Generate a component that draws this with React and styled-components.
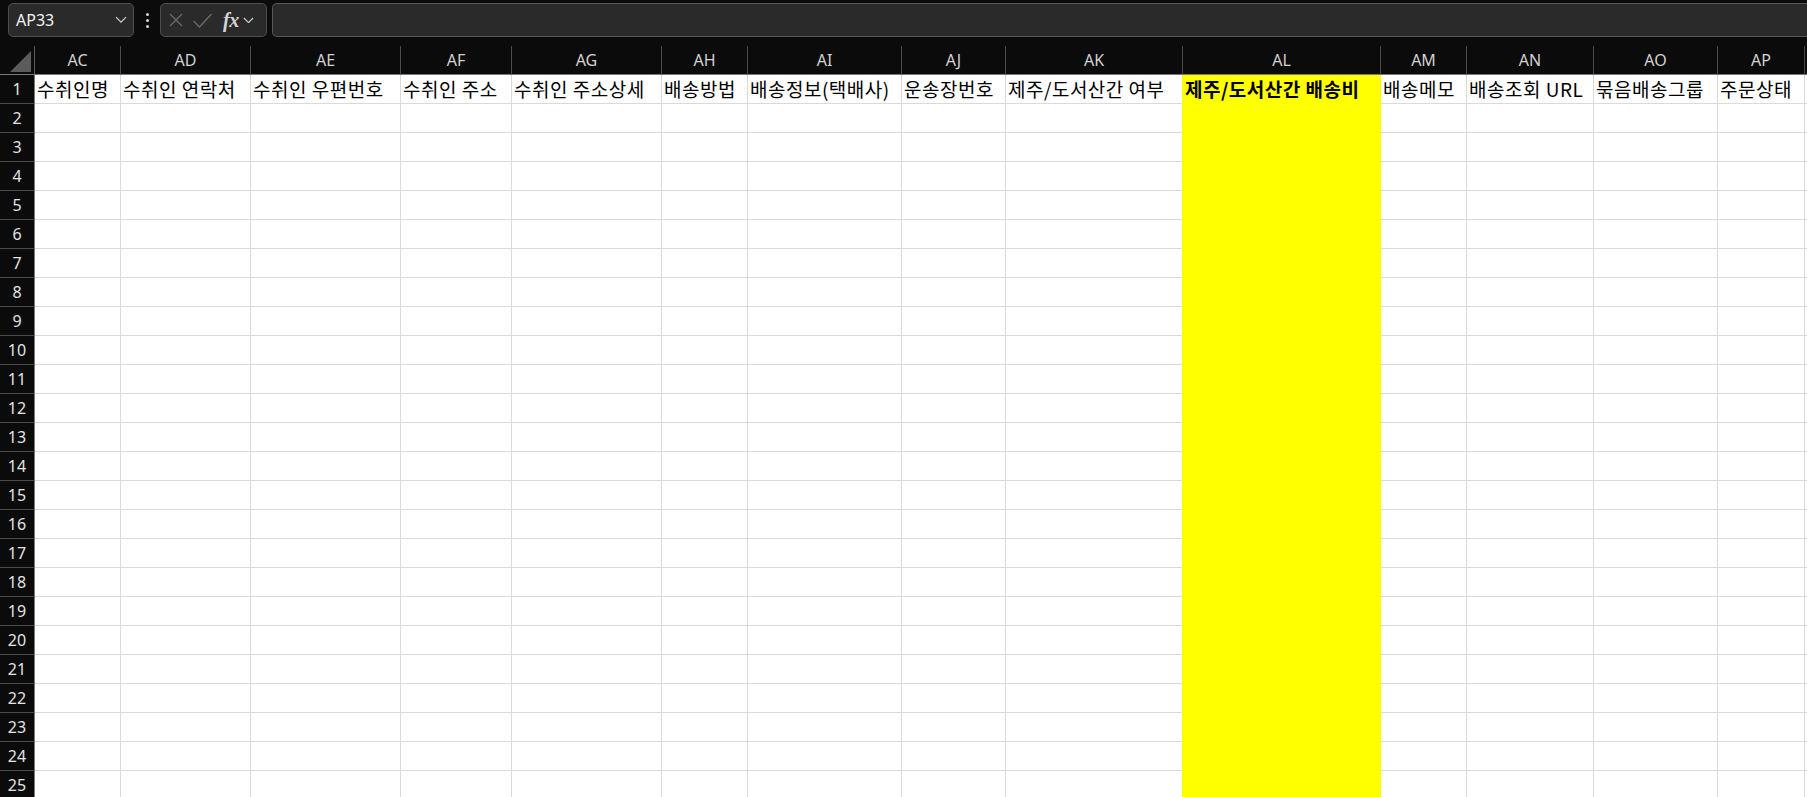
import React from "react"
import styled, { createGlobalStyle } from "styled-components"

const GlobalStyle = createGlobalStyle`
  html, body {
    margin: 0;
    padding: 0;
    background: #0b0b0b;
    overflow: hidden;
  }
  * { box-sizing: border-box; }
`

const columns = [
  { id: "AC", w: 86, title: "수취인명" },
  { id: "AD", w: 130, title: "수취인 연락처" },
  { id: "AE", w: 150, title: "수취인 우편번호" },
  { id: "AF", w: 111, title: "수취인 주소" },
  { id: "AG", w: 150, title: "수취인 주소상세" },
  { id: "AH", w: 86, title: "배송방법" },
  { id: "AI", w: 154, title: "배송정보(택배사)" },
  { id: "AJ", w: 104, title: "운송장번호" },
  { id: "AK", w: 177, title: "제주/도서산간 여부" },
  { id: "AL", w: 198, title: "제주/도서산간 배송비", hot: true },
  { id: "AM", w: 86, title: "배송메모" },
  { id: "AN", w: 127, title: "배송조회 URL" },
  { id: "AO", w: 124, title: "묶음배송그룹" },
  { id: "AP", w: 87, title: "주문상태" },
  // AQ only peeks in at the right edge, its letter is off screen
  { id: "", w: 40, title: "" },
]

const ROWS = 25
const template = `35px ${columns.map((c) => c.w + "px").join(" ")}`

const Page = styled.div`
  width: 1807px;
  height: 797px;
  overflow: hidden;
  background: #0b0b0b;
  display: flex;
  flex-direction: column;
`

const FormulaBar = styled.div`
  display: flex;
  align-items: center;
  height: 37px;
  padding: 3px 0 0 8px;
`

const NameBox = styled.div`
  width: 126px;
  height: 34px;
  display: flex;
  align-items: center;
  justify-content: space-between;
  padding: 0 6px 0 7px;
  background: #2a2a2a;
  border: 1px solid #4e4e4e;
  border-radius: 5px;
  color: #f2f2f2;
  font: 16px "Noto Sans", "Liberation Sans", sans-serif;
`

const Dots = styled.div`
  width: 26px;
  display: flex;
  flex-direction: column;
  align-items: center;
  gap: 3px;
  span {
    width: 3px;
    height: 3px;
    border-radius: 50%;
    background: #d8d8d8;
  }
`

const FxBox = styled.div`
  width: 107px;
  height: 34px;
  display: flex;
  align-items: center;
  padding-left: 7px;
  gap: 8px;
  background: #2a2a2a;
  border: 1px solid #4e4e4e;
  border-radius: 5px;
`

const Fx = styled.span`
  font: italic bold 20px "Liberation Serif", "DejaVu Serif", serif;
  color: #d4d4d4;
  margin-left: 2px;
  letter-spacing: -0.5px;
  display: flex;
  align-items: center;
  gap: 4px;
`

const FormulaInput = styled.div`
  flex: 1;
  height: 34px;
  margin-left: 5px;
  background: #2a2a2a;
  border: 1px solid #575757;
  border-right: none;
  border-radius: 5px 0 0 5px;
`

const Sheet = styled.div`
  margin-top: 9px;
  display: grid;
  grid-template-columns: ${template};
  grid-template-rows: 29px;
  grid-auto-rows: 29px;
`

const Corner = styled.div`
  background: #0b0b0b;
  border-right: 1px solid #5a5a5a;
  border-bottom: 1px solid #7a7a7a;
  display: flex;
  align-items: flex-end;
  justify-content: flex-end;
  padding: 0 3px 2px 0;
  &::before {
    content: "";
    width: 21px;
    height: 21px;
    background: #5c5c5c;
    clip-path: polygon(100% 0, 100% 100%, 0 100%);
  }
`

const ColHead = styled.div`
  background: #0b0b0b;
  border-right: 1px solid #4a4a4a;
  border-bottom: 1px solid #7a7a7a;
  color: #d2d2d2;
  font: 16px "Noto Sans", "Liberation Sans", sans-serif;
  display: flex;
  align-items: center;
  justify-content: center;
  padding-bottom: 1px;
  overflow: hidden;
`

const RowHead = styled.div`
  background: #0b0b0b;
  border-right: 1px solid #7a7a7a;
  border-bottom: 1px solid #4a4a4a;
  color: #e2e2e2;
  font: 16px "Noto Sans", "Liberation Sans", sans-serif;
  display: flex;
  align-items: center;
  justify-content: center;
`

const Cell = styled.div`
  background: ${(p) => (p.$hot ? "#ffff00" : "#ffffff")};
  border-right: 1px solid ${(p) => (p.$hot ? "#ffff00" : "#dadada")};
  border-bottom: 1px solid ${(p) => (p.$hot ? "#ffff00" : "#dadada")};
  box-shadow: ${(p) => (p.$hot ? "-1px 0 0 #ffff00" : "none")};
  color: #000;
  font: ${(p) => (p.$bold ? 700 : 400)} 19px "Noto Sans CJK KR", "Noto Sans", sans-serif;
  letter-spacing: 0.5px;
  line-height: 1;
  display: flex;
  align-items: center;
  padding: 0 0 1px 2px;
  white-space: nowrap;
  overflow: hidden;
`

const Chevron = ({ size = 12, color = "#cfcfcf" }) => (
  <svg width={size} height={size * 0.6} viewBox="0 0 12 7" fill="none">
    <path d="M1 1l5 5 5-5" stroke={color} strokeWidth="1.3" />
  </svg>
)

const CrossIcon = () => (
  <svg width="16" height="16" viewBox="0 0 16 16" fill="none">
    <path d="M2 2l12 12M14 2L2 14" stroke="#6a6a6a" strokeWidth="1.4" />
  </svg>
)

const CheckIcon = () => (
  <svg width="21" height="17" viewBox="0 0 21 17" fill="none">
    <path d="M1.5 9l6 6L19.5 2" stroke="#6a6a6a" strokeWidth="1.4" />
  </svg>
)

export default function App() {
  const rows = Array.from({ length: ROWS }, (_, i) => i + 1)
  return (
    <Page>
      <GlobalStyle />
      <FormulaBar>
        <NameBox>
          <span>AP33</span>
          <Chevron />
        </NameBox>
        <Dots>
          <span />
          <span />
          <span />
        </Dots>
        <FxBox>
          <CrossIcon />
          <CheckIcon />
          <Fx>
            fx
            <Chevron size={11} />
          </Fx>
        </FxBox>
        <FormulaInput />
      </FormulaBar>

      <Sheet>
        <Corner />
        {columns.map((c, i) => (
          <ColHead key={i}>{c.id}</ColHead>
        ))}
        {rows.map((r) => (
          <React.Fragment key={r}>
            <RowHead>{r}</RowHead>
            {columns.map((c, i) => (
              <Cell key={i} $hot={c.hot} $bold={c.hot && r === 1}>
                {r === 1 ? c.title : ""}
              </Cell>
            ))}
          </React.Fragment>
        ))}
      </Sheet>
    </Page>
  )
}
